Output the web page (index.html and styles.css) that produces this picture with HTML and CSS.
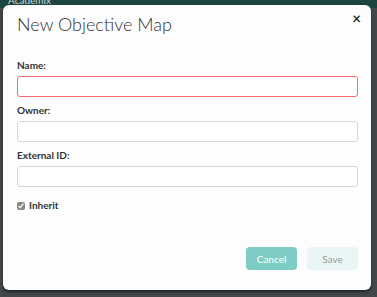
FILE: index.html
```html
<!DOCTYPE html>
<html lang="en">
<head>
    <meta charset="UTF-8">
    <title>New Objective Map</title>
    <link rel="stylesheet" href="styles.css">
</head>
<body>
    <div class="topbar"><span class="app-name">Academix</span></div>
    <div class="modal">
        <div class="modal-header">
            <h1>New Objective Map</h1>
            <span class="close">&times;</span>
        </div>
        <div class="form-group">
            <label for="name">Name:</label>
            <input type="text" id="name" class="invalid">
        </div>
        <div class="form-group">
            <label for="owner">Owner:</label>
            <input type="text" id="owner">
        </div>
        <div class="form-group">
            <label for="external-id">External ID:</label>
            <input type="text" id="external-id">
        </div>
        <div class="check-row">
            <input type="checkbox" id="inherit" checked>
            <label for="inherit">Inherit</label>
        </div>
        <div class="modal-footer">
            <button class="btn-cancel">Cancel</button>
            <button class="btn-save">Save</button>
        </div>
    </div>
</body>
</html>
```
FILE: styles.css
```css
body {
    margin: 0;
    padding: 0;
    height: 297px;
    overflow: hidden;
    font-family: Lato, "Open Sans", sans-serif;
    background-color: #44474a;
}
.topbar {
    height: 8px;
    background-color: #1d4540;
    padding-left: 8px;
    overflow: hidden;
}
.app-name {
    color: #cfd8d6;
    font-size: 10px;
    line-height: 0;
    display: block;
}
.modal {
    margin: -3px 0 0 3px;
    width: 368px;
    height: 285px;
    box-sizing: border-box;
    background-color: #fdfdfd;
    border-radius: 6px;
    box-shadow: 0 2px 3px rgba(0,0,0,0.5);
    padding: 0 13px 0 14px;
    display: flex;
    flex-direction: column;
}
.modal-header {
    display: flex;
    justify-content: space-between;
    align-items: flex-start;
    height: 54px;
}
h1 {
    margin: 8px 0 0 0;
    font-size: 18px;
    font-weight: 300;
    color: #333;
}
.close {
    margin: 4px -3px 0 0;
    font-size: 15px;
    font-weight: bold;
    color: #333;
}
.form-group {
    margin-bottom: 7px;
}
.form-group label {
    display: block;
    font-size: 10px;
    font-weight: bold;
    color: #333;
    margin-bottom: 4px;
    height: 13px;
    line-height: 13px;
}
.form-group input {
    display: block;
    width: 100%;
    height: 21px;
    box-sizing: border-box;
    border: 1px solid #d6d6d6;
    border-radius: 3px;
    background: white;
}
.form-group input.invalid {
    border-color: #f06d6d;
}
.check-row {
    display: flex;
    align-items: center;
    margin-top: 5px;
    font-size: 10px;
    font-weight: bold;
    color: #333;
}
.check-row input {
    width: 8px;
    height: 8px;
    margin: 1px 4px 0 0;
    accent-color: #888;
}
.modal-footer {
    display: flex;
    justify-content: flex-end;
    gap: 10px;
    margin-top: 36px;
}
button {
    width: 51px;
    height: 23px;
    border: none;
    border-radius: 4px;
    font-family: Lato, sans-serif;
    font-size: 10px;
}
.btn-cancel {
    background-color: #7ecdc4;
    color: white;
}
.btn-save {
    background-color: #eaf5f5;
    color: #999;
}
```
